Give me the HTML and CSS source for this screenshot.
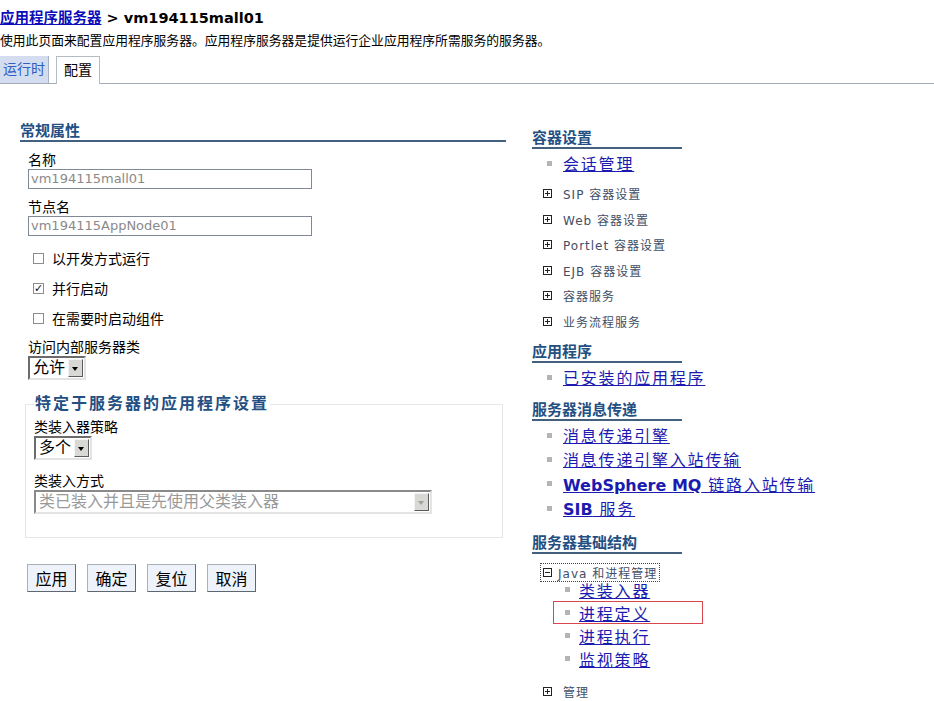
FILE: index.html
```html
<!DOCTYPE html>
<html lang="zh-CN">
<head>
  <meta charset="UTF-8">
  <title>应用程序服务器</title>
  <link rel="stylesheet" href="styles.css">
</head>
<body>
  <div class="crumb">
    <a href="#">应用程序服务器</a> &gt; vm194115mall01
  </div>
  <p class="desc">使用此页面来配置应用程序服务器。应用程序服务器是提供运行企业应用程序所需服务的服务器。</p>

  <div class="tabs">
    <span class="tab">运行时</span>
    <span class="tab active">配置</span>
  </div>

  <div class="main">

    <div class="left">
      <h3 class="head">常规属性</h3>

      <div class="field">
        <label>名称</label>
        <div class="text-box">vm194115mall01</div>
      </div>
      <div class="field">
        <label>节点名</label>
        <div class="text-box">vm194115AppNode01</div>
      </div>

      <div class="checks">
        <div class="check"><span class="box"></span>以开发方式运行</div>
        <div class="check"><span class="box on">&#10003;</span>并行启动</div>
        <div class="check"><span class="box"></span>在需要时启动组件</div>
      </div>

      <div class="field after-checks">
        <label>访问内部服务器类</label>
        <div class="select small"><span class="val">允许</span><span class="arrow"></span></div>
      </div>

      <fieldset class="group">
        <legend>特定于服务器的应用程序设置</legend>
        <div class="field first">
          <label>类装入器策略</label>
          <div class="select small"><span class="val">多个</span><span class="arrow"></span></div>
        </div>
        <div class="field">
          <label>类装入方式</label>
          <div class="select wide disabled"><span class="val">类已装入并且是先使用父类装入器</span><span class="arrow"></span></div>
        </div>
      </fieldset>

      <div class="buttons">
        <button>应用</button>
        <button>确定</button>
        <button>复位</button>
        <button>取消</button>
      </div>
    </div>

    <div class="right">
      <h3 class="head">容器设置</h3>
      <ul class="links">
        <li><a href="#">会话管理</a></li>
      </ul>
      <ul class="tree">
        <li><span class="pm plus"></span>SIP 容器设置</li>
        <li><span class="pm plus"></span>Web 容器设置</li>
        <li><span class="pm plus"></span>Portlet 容器设置</li>
        <li><span class="pm plus"></span>EJB 容器设置</li>
        <li><span class="pm plus"></span>容器服务</li>
        <li><span class="pm plus"></span>业务流程服务</li>
      </ul>

      <h3 class="head">应用程序</h3>
      <ul class="links">
        <li><a href="#">已安装的应用程序</a></li>
      </ul>

      <h3 class="head">服务器消息传递</h3>
      <ul class="links tight">
        <li><a href="#">消息传递引擎</a></li>
        <li><a href="#">消息传递引擎入站传输</a></li>
        <li><a href="#"><b>WebSphere MQ</b> 链路入站传输</a></li>
        <li><a href="#"><b>SIB</b> 服务</a></li>
      </ul>

      <h3 class="head infra">服务器基础结构</h3>
      <div class="open-node"><span class="pm"></span>Java 和进程管理</div>
      <ul class="links sub">
        <li><a href="#">类装入器</a></li>
        <li class="marked"><a href="#">进程定义</a></li>
        <li><a href="#">进程执行</a></li>
        <li><a href="#">监视策略</a></li>
      </ul>
      <ul class="tree last">
        <li><span class="pm plus"></span>管理</li>
      </ul>
    </div>

  </div>
</body>
</html>
```

FILE: styles.css
```css
* {
  box-sizing: border-box;
}

body {
  margin: 0;
  font-family: "DejaVu Sans", "Noto Sans CJK SC", sans-serif;
  color: #000;
  background: #fff;
}

a {
  color: #1b1bb0;
}

.crumb {
  padding-top: 8px;
  font-size: 14.5px;
  font-weight: bold;
  line-height: 20px;
}

.crumb a {
  color: #0d0dba;
}

.desc {
  margin: 4px 0 0;
  font-size: 12.8px;
  line-height: 18px;
}

/* tabs */
.tabs {
  display: flex;
  align-items: flex-end;
  gap: 7px;
  margin-top: 6px;
  height: 28px;
  border-bottom: 1px solid #a4acb6;
}

.tab {
  height: 27px;
  padding: 0 3px;
  font-size: 14px;
  line-height: 27px;
  color: #2d5fc4;
  background: #d4dcf0;
  border-right: 1px solid #a8b0c8;
}

.tab.active {
  height: 28px;
  margin-bottom: -1px;
  padding: 0 7px;
  color: #000;
  background: #fff;
  border: 1px solid #b6bcc4;
  border-bottom: none;
}

.main {
  display: flex;
}

.head {
  margin: 0;
  font-size: 15px;
  line-height: 18px;
  font-weight: bold;
  color: #244f82;
  border-bottom: 2px solid #44607f;
}

/* left column */
.left {
  width: 506px;
  padding: 38px 0 0 20px;
}

.field {
  margin-left: 8px;
  margin-top: 9px;
}

.field label {
  display: block;
  font-size: 14px;
  line-height: 18px;
}

.text-box {
  width: 284px;
  height: 20px;
  padding-left: 2px;
  border: 1px solid #7f8a96;
  font-size: 13px;
  line-height: 18px;
  color: #8a8a8a;
}

.checks {
  margin-top: 7px;
}

.check {
  display: flex;
  align-items: center;
  height: 30px;
  margin-left: 13px;
  font-size: 14px;
}

.box {
  width: 11px;
  height: 11px;
  margin-right: 8px;
  border: 1px solid #8c8c8c;
  background: #fff;
  font-size: 10px;
  line-height: 9px;
  text-align: center;
  font-weight: bold;
}

.box.on {
  color: #111;
  font-size: 11px;
}

.field.after-checks {
  margin-top: 5px;
}

.select {
  display: flex;
  height: 24px;
  border: 2px solid;
  border-color: #6b6b6b #e4e4e4 #e4e4e4 #6b6b6b;
  background: #fff;
}

.select .val {
  flex: 1;
  padding-left: 3px;
  font-size: 16px;
  line-height: 20px;
}

.select .arrow {
  position: relative;
  width: 15px;
  margin: 1px;
  background: #d8d8d4;
  border: 1px solid;
  border-color: #f4f4f4 #5c5c5c #5c5c5c #f4f4f4;
}

.select .arrow::after {
  content: "";
  position: absolute;
  left: 3px;
  top: 7px;
  border: 3px solid transparent;
  border-top: 4px solid #000;
}

.select.small {
  width: 58px;
}

.select.wide {
  width: 398px;
  border-color: #8a8a8a #e4e4e4 #e4e4e4 #8a8a8a;
}

.select.disabled .val {
  color: #9a9a9a;
}

.select.disabled .arrow::after {
  border-top-color: #a0a0a0;
}

.group {
  margin: 15px 3px 0 5px;
  padding: 0 8px 23px 8px;
  border: 1px solid #e6e6e6;
}

.group legend {
  padding: 0 1px;
  font-size: 16px;
  font-weight: bold;
  letter-spacing: 2px;
  color: #244f82;
  line-height: 18px;
}

.group .field {
  margin-left: 0;
  margin-top: 12px;
}

.group .field.first {
  margin-top: 5px;
}

.buttons {
  display: flex;
  gap: 11px;
  margin: 26px 0 0 7px;
}

.buttons button {
  width: 49px;
  height: 28px;
  padding: 0;
  font-family: inherit;
  font-size: 16px;
  background: #eef2fb;
  border: 1px solid #7e8892;
  border-color: #a8b0ba #5e6670 #5e6670 #a8b0ba;
}

/* right column */
.right {
  padding: 45px 0 0 26px;
}

.right .head {
  width: 150px;
}

ul {
  list-style: none;
  margin: 0;
  padding: 0;
}

.links li {
  display: flex;
  align-items: center;
  height: 24px;
  padding-left: 15px;
  font-size: 16px;
  letter-spacing: 1.8px;
}

.links li::before {
  content: "";
  width: 5px;
  height: 5px;
  margin-right: 11px;
  background: #b4b4b4;
}

.links {
  margin-top: 2px;
}

.links b {
  letter-spacing: 0;
}

.tree {
  margin: 6px 0 9px;
}

.tree li {
  display: flex;
  align-items: center;
  height: 25.5px;
  padding-left: 11px;
  font-size: 12px;
  letter-spacing: 1px;
  color: #3f4e66;
}

.pm {
  position: relative;
  width: 9px;
  height: 9px;
  margin-right: 11px;
  border: 1px solid #222;
}

.pm::before,
.pm.plus::after {
  content: "";
  position: absolute;
  background: #222;
}

.pm::before {
  left: 1px;
  top: 3px;
  width: 5px;
  height: 1px;
}

.pm.plus::after {
  left: 3px;
  top: 1px;
  width: 1px;
  height: 5px;
}

.links + .head {
  margin-top: 12px;
}

.links + .head.infra {
  margin-top: 14px;
}

.links.tight li {
  height: 24.3px;
}

.open-node {
  display: inline-flex;
  align-items: center;
  height: 17px;
  margin: 10px 0 0 9px;
  padding-right: 2px;
  outline: 1px dotted #444;
  font-size: 12px;
  letter-spacing: 1px;
  color: #3f4e66;
}

.open-node .pm {
  margin: 0 6px 0 2px;
}

.links.sub {
  margin-top: -3px;
}

.links.sub li {
  height: 23px;
  padding-left: 33px;
}

.links.sub li::before {
  margin-right: 9px;
}

.links.sub li.marked {
  width: 150px;
  margin-left: 21px;
  padding-left: 12px;
  outline: 1px solid #d9474c;
  outline-offset: -1px;
}

.tree.last {
  margin-top: 9px;
}
```
